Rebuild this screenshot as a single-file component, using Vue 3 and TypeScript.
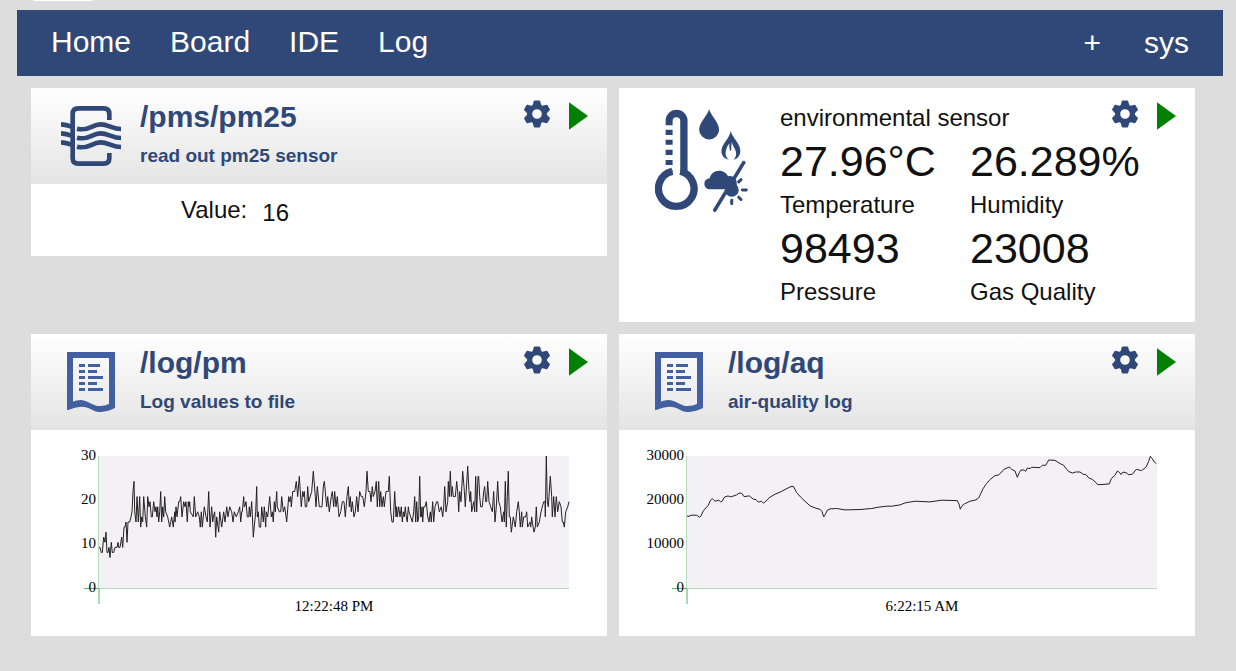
<script setup lang="ts">
interface Segment {
  offset: number
  samples: string
}

interface Series {
  path: string
  title: string
  note: string
  ticks: string[]
  time: string
  floor: number
  ceiling: number
  segments: Segment[]
}

const plot = { left: 68, top: 26, width: 470, height: 132 }

const logs: Series[] = [
  {
    path: 'pm',
    title: '/log/pm',
    note: 'Log values to file',
    ticks: ['30', '20', '10', '0'],
    time: '12:22:48 PM',
    floor: 0,
    ceiling: 26,
    segments: [
      {
        offset: -72,
        samples:
          '72:8 75:8 79:7 82:7 86:10 90:9 93:11 96:7 99:7 102:8 105:6 109:9 112:7 116:7 120:8 126:8 129:9 131:8 135:8 140:10 143:8 147:12 150:12 153:13 156:9 159:13 164:13 168:14 171:15 174:19 177:21 179:15 183:13 186:18 190:13 194:18 197:12 200:14 203:13 206:18 211:14 215:12 218:18 222:16 225:17 229:14 232:14 236:17 240:15 243:16 246:14 248:16 251:13 254:15 257:19 260:13 263:16 266:14 269:18 272:15 278:14 284:12 290:14 295:12 299:15 300:13 303:16 306:14 311:17 314:17 317:18 321:14 326:17 330:16 333:17 337:13 340:17 342:16 344:17 346:15 355:14 358:18 362:14 368:15 373:14 376:12 379:15 382:12 388:16 393:14 397:13 401:19 405:12 410:16 413:13 415:14 419:15 422:10 425:14 431:11 434:15 440:12 446:15 450:13 455:16 459:14 464:16 470:15 474:13 478:15 484:14 490:15 494:16 497:13 500:15 502:15 506:18 508:16',
      },
      {
        offset: 423,
        samples:
          '14:16 18:17 22:14 26:14 28:16 31:14 35:17 40:10 44:13 47:15 50:20 52:14 55:15 58:12 62:12 65:16 70:13 73:16 77:12 79:15 83:14 89:18 94:14 97:15 100:13 103:17 106:15 110:19 112:16 118:15 122:15 125:18 130:15 134:16 140:13 146:18 149:17 152:18 154:16 158:19 164:19 169:21 173:18 178:22 184:16 188:19 190:18 193:19 196:16 200:16 203:20 206:17 215:19 220:23 226:18 228:16 232:20 238:16 246:16 250:20 253:21 256:19 260:16 263:18 268:15 274:18 277:19 281:16 284:19 288:16 292:18 297:14 302:15 307:17 312:17 316:14 321:18 325:20 328:16 331:18 334:15 337:17 342:14 346:15 350:18 354:15 359:19 364:18 368:18 373:16 378:19 381:23 385:19 390:19 393:17 397:20 400:18 405:19 409:21 412:16 416:21 419:16 422:19 426:16 430:18 433:16 438:19 445:19 448:22 452:15 456:13 460:13 464:19 468:14 470:16 472:14 476:16 480:14 484:16 487:13 490:15 493:14 496:16 499:14 502:13 505:16',
      },
      {
        offset: 918,
        samples:
          '12:15 17:14 22:13 26:15 29:18 32:13 35:17 38:13 41:14 44:22 47:14 49:14 51:16 53:13 56:16 60:16 64:17 68:14 72:13 76:15 79:13 83:17 86:13 90:16 95:17 98:17 103:15 109:16 113:14 116:16 119:20 123:15 128:17 130:21 133:18 136:23 139:18 142:20 145:18 151:18 155:21 158:19 161:15 164:19 168:17 173:23 177:20 181:16 188:24 192:19 195:17 197:19 200:15 206:17 209:15 212:22 215:15 219:22 221:22 224:18 227:16 232:16 236:19 239:20 242:17 245:17 248:21 252:17 257:16 262:15 266:19 270:13 274:16 278:21 281:17 286:16 291:13 296:15 298:13 301:21 304:12 307:18 310:23 313:14 316:14 319:11 325:14 331:12 335:15 340:17 343:15 346:12 350:15 352:12 356:14 362:14 365:15 368:12 375:13 377:12 380:14 382:13 387:11 391:12 394:16 397:12 403:13 408:15 416:17 420:17 421:14 424:26 427:17 430:16 436:22 440:18 442:14 446:18 450:14 454:18 458:15 463:17 468:16 472:13 475:13 478:12 482:15 488:16 492:17',
      },
    ],
  },
  {
    path: 'aq',
    title: '/log/aq',
    note: 'air-quality log',
    ticks: ['30000', '20000', '10000', '0'],
    time: '6:22:15 AM',
    floor: 445,
    ceiling: 48,
    segments: [
      {
        offset: -141,
        samples:
          '141:229 147:229 155:226 170:226 178:232 182:230 190:213 205:196 212:180 217:176 225:184 236:181 242:186 247:184 253:172 264:168 272:171 290:165 297:160 305:160 312:170 328:168 340:178 348:179 355:187 364:184 371:190 390:172 405:163 420:157 435:149 450:141 460:139 470:158 485:175 510:198 525:204 541:209 546:215 551:231 556:224 562:211 570:207 590:206 615:210 660:209 695:206 715:202 740:199 755:199',
      },
      {
        offset: 639,
        samples:
          '0:195 15:189 45:184 90:186 125:181 172:182 178:195 181:208 184:202 190:194 210:184 228:180 236:174 250:145 260:130 270:119 285:107 296:105 312:88 328:81 335:88 345:93 352:112 358:98 363:90 372:90 377:94 382:84 390:86 395:82 420:83 427:76 437:76 446:60 465:61 480:71 490:75 506:95 518:99 527:96 540:96 550:103 558:104 566:114 577:118 594:134 603:134 628:132 634:116 645:106 652:93 658:97 663:104 669:96 680:99 685:104 697:103 709:88 724:92 738:82 746:64 751:49 756:55 763:66 769:71',
      },
    ],
  },
]

// Sample times are counted in thirds of a plot unit.
function trace(series: Series): string {
  return series.segments
    .flatMap(({ offset, samples }) =>
      samples.split(' ').map((sample) => {
        const [time, value] = sample.split(':').map(Number)
        const ratio = (value - series.floor) / (series.ceiling - series.floor)
        const x = plot.left + (time + offset) / 3
        const y = plot.top + plot.height * (1 - ratio)
        return `${x.toFixed(1)},${y.toFixed(1)}`
      }),
    )
    .join(' ')
}

const readings = [
  { label: 'Temperature', value: '27.96°C' },
  { label: 'Humidity', value: '26.289%' },
  { label: 'Pressure', value: '98493' },
  { label: 'Gas Quality', value: '23008' },
]

const teeth = [0, 60, 120, 180, 240, 300]
const rows = [36, 27, 45, 27, 45].map((width, i) => ({ y: 36 + i * 18, width }))
</script>

<template>
  <div class="page">
    <div class="tab"></div>
    <nav class="bar">
      <div class="left">
        <a href="#home">Home</a>
        <a href="#board">Board</a>
        <a href="#ide">IDE</a>
        <a href="#log">Log</a>
      </div>
      <div class="right">
        <a href="#add" aria-label="Add">+</a>
        <a href="#sys">sys</a>
      </div>
    </nav>

    <svg class="defs" aria-hidden="true">
      <symbol id="gear" viewBox="0 0 28 28">
        <path v-for="a in teeth" :key="a" :transform="`rotate(${a} 14 14)`" d="M9.500 6L10.800 1.200Q11 .5 11.700 .5H16.300Q17 .5 17.200 1.200L18.500 6Z" />
        <path fill-rule="evenodd" d="M14 4A10 10 0 1 0 14 24A10 10 0 1 0 14 4ZM14 9.200A4.800 4.800 0 1 1 14 18.800A4.800 4.800 0 1 1 14 9.200Z" />
      </symbol>
      <symbol id="play" viewBox="0 0 20 28">
        <path d="M.5 .3L19.500 14L.5 27.700Z" />
      </symbol>
    </svg>

    <main class="grid">
      <section class="card">
        <header class="head">
          <svg class="icon" viewBox="0 0 180 180" fill="none" stroke="#2f4878">
            <path stroke-width="14" d="M145 42V24Q145 7 128 7H52Q35 7 35 24V156Q35 173 52 173H128Q145 173 145 156V141" />
            <g stroke-width="14">
              <path v-for="y in [0, 27, 54]" :key="y" :transform="`translate(0 ${y})`" d="M0 55Q16 56 31 62M48 68C84 77 92 55 118 55C142 55 154 69 180 69" />
            </g>
          </svg>
          <div>
            <h2>/pms/pm25</h2>
            <p>read out pm25 sensor</p>
          </div>
        </header>
        <div class="single">
          <span>Value:</span>
          <output>16</output>
        </div>
        <div class="actions">
          <button class="gear" aria-label="Settings"><svg><use href="#gear" /></svg></button>
          <button class="play" aria-label="Run"><svg><use href="#play" /></svg></button>
        </div>
      </section>

      <section class="card env">
        <svg class="climate" viewBox="0 0 280 309" fill="#2f4878">
          <path d="M32 48V35A33 33 0 0 1 98 35V190H76V36A11.500 11.500 0 0 0 53 36V48Z" />
          <path d="M32 62h21v16H32ZM32 92h21v15H32ZM32 122h21v16H32ZM32 153h21v15H32ZM32 183h21v16H32Z" />
          <path d="M76 187A53.500 53.500 0 1 1 52 187" fill="none" stroke="#2f4878" stroke-width="22" />
          <path d="M163 0C170 22 193 40 193 62A30 29 0 0 1 133 62C133 40 156 22 163 0Z" />
          <path fill-rule="evenodd" d="M228 66C232 86 257 103 257 126C257 143 243 152 237 152C244 145 246 135 243 126C240 117 233 109 231 99C229 108 231 119 228 127C224 122 223 113 224 103C216 111 210 130 214 140C216 148 221 150 223 152C208 150 200 139 200 126C200 105 224 90 228 66Z" />
          <path d="M165 241A16 16 0 0 1 165 208C167 194 179 185 193 185C206 185 216 193 220 202C234 198 246 209 246 221V241Z" />
          <circle cx="231" cy="243" r="21" />
          <path d="M180 304L267 161" stroke="#2f4878" stroke-width="11" stroke-linecap="round" />
          <path d="M252 219L259 212M263 243H275M252 265L259 272M231 274V285" stroke="#2f4878" stroke-width="9" stroke-linecap="round" />
        </svg>
        <div class="climate-data">
          <h2>environmental sensor</h2>
          <dl>
            <div v-for="r in readings" :key="r.label">
              <dt>{{ r.label }}</dt>
              <dd>{{ r.value }}</dd>
            </div>
          </dl>
        </div>
        <div class="actions">
          <button class="gear" aria-label="Settings"><svg><use href="#gear" /></svg></button>
          <button class="play" aria-label="Run"><svg><use href="#play" /></svg></button>
        </div>
      </section>

      <section v-for="log in logs" :key="log.path" class="card">
        <header class="head">
          <svg class="icon" viewBox="-18 0 180 180" fill="#4260a1">
            <path fill-rule="evenodd" d="M0 0H144V168C128 176 110 181 94 180C74 176 66 164 44 164C26 165 16 170 0 175ZM18 18V149C29 145 41 142 53 146C70 151 80 162 98 162C108 162 118 160 126 156V18Z" />
            <template v-for="row in rows" :key="row.y">
              <rect x="36" :y="row.y" width="18" height="9" />
              <rect x="63" :y="row.y" :width="row.width" height="9" />
            </template>
          </svg>
          <div>
            <h2>{{ log.title }}</h2>
            <p>{{ log.note }}</p>
          </div>
        </header>
        <svg class="chart" viewBox="0 0 576 206" role="img" :aria-label="log.note">
          <rect :x="plot.left" :y="plot.top" :width="plot.width" :height="plot.height" fill="#f3f1f5" />
          <path d="M67.500 26V158" stroke="#b4ddb7" />
          <path d="M68 158.500H538" stroke="#b4ddb7" />
          <path d="M68 158V174" stroke="#a9d9ac" stroke-width="2" />
          <path d="M53 158.500H68" stroke="#5fb765" />
          <polyline :points="trace(log)" fill="none" stroke="#222" />
          <text v-for="(tick, i) in log.ticks" :key="tick" x="65" :y="30 + i * 44" text-anchor="end">{{ tick }}</text>
          <text x="303" y="181" text-anchor="middle">{{ log.time }}</text>
        </svg>
        <div class="actions">
          <button class="gear" aria-label="Settings"><svg><use href="#gear" /></svg></button>
          <button class="play" aria-label="Run"><svg><use href="#play" /></svg></button>
        </div>
      </section>
    </main>
  </div>
</template>

<style>
body {
  background: #ddd;
}
</style>

<style scoped>
.page {
  padding: 0 13px 35px 17px;
  font-family: "Liberation Sans", Arial, sans-serif;
  color: #111;
}
.tab {
  width: 60px;
  height: 1px;
  margin: 0 0 9px 16px;
  background: #fff;
  border-radius: 0 0 4px 4px;
}
.bar {
  display: flex;
  justify-content: space-between;
  padding: 14px 34px 16px;
  background: #2f4878;
  font-size: 30px;
  line-height: 36px;
}
.bar a {
  color: #fff;
  text-decoration: none;
}
.left {
  display: flex;
  gap: 39px;
}
.right {
  display: flex;
  gap: 43px;
  padding-top: 1px;
  line-height: 35px;
}
.defs {
  position: absolute;
  width: 0;
  height: 0;
}
.grid {
  display: grid;
  grid-template-columns: 1fr 1fr;
  align-items: start;
  gap: 12px;
  padding: 12px 28px 0 14px;
}
.card {
  position: relative;
  background: #fff;
}
.head {
  display: flex;
  gap: 19px;
  height: 84px;
  padding: 12px 0 0 30px;
  background: linear-gradient(#fff, #e4e4e4);
  color: #2f4878;
}
.icon {
  width: 60px;
  height: 60px;
  margin-top: 6px;
}
h2,
p,
dl,
dd {
  margin: 0;
}
.head h2 {
  font-size: 30px;
  line-height: 34px;
}
.head p {
  margin-top: 6px;
  font-size: 19px;
  line-height: 32px;
  font-weight: bold;
}
.single {
  display: flex;
  gap: 15px;
  padding: 12px 0 29px 150px;
  font-size: 24px;
  line-height: 28px;
}
.single output {
  padding-top: 3px;
}
.actions {
  position: absolute;
  top: 12px;
  right: 18px;
  display: flex;
  gap: 17px;
}
button {
  padding: 0;
  border: 0;
  background: none;
  cursor: pointer;
}
button svg {
  display: block;
  width: 100%;
  height: 100%;
}
.gear {
  width: 28px;
  height: 28px;
  fill: #2f4878;
}
.play {
  width: 21px;
  height: 28px;
  margin-top: 2px;
  fill: #008000;
}
.env {
  display: flex;
  gap: 32px;
  padding: 12px 0 12px 36px;
}
.climate {
  width: 93px;
  height: 103px;
  margin-top: 9px;
}
.env h2 {
  font-size: 24px;
  line-height: 36px;
  font-weight: normal;
}
dl {
  display: grid;
  grid-template-columns: 190px 190px;
}
dl div {
  display: flex;
  flex-direction: column-reverse;
}
dt {
  font-size: 24px;
  line-height: 36px;
}
dd {
  font-size: 43px;
  line-height: 51px;
}
.chart {
  display: block;
  width: 100%;
  font-family: "Liberation Serif", "Times New Roman", serif;
  font-size: 15px;
}
.chart text {
  fill: #000;
}
</style>
